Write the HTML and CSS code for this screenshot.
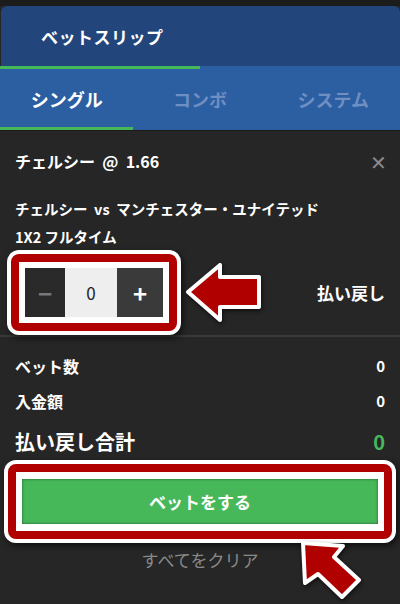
FILE: index.html
```html
<!DOCTYPE html>
<html lang="ja">

<head>
    <meta charset="UTF-8">
    <meta name="viewport" content="width=device-width, initial-scale=1.0">
    <title>ベットスリップ</title>
    <link rel="stylesheet" href="styles.css">
</head>

<body>
    <div class="slip">
        <div class="topStrip"></div>
        <div class="slipHead">
            <h1>ベットスリップ</h1>
        </div>
        <div class="progress"><span></span></div>
        <div class="tabs">
            <div class="tab active">シングル</div>
            <div class="tab">コンボ</div>
            <div class="tab">システム</div>
        </div>

        <div class="betBody">
            <div class="pick">
                <span>チェルシー&nbsp; @&nbsp; 1.66</span>
                <span class="close">&#x2715;</span>
            </div>
            <p class="match">チェルシー&nbsp; vs&nbsp; マンチェスター・ユナイテッド</p>
            <p class="market">1X2 フルタイム</p>

            <div class="stakeRow">
                <div class="callout callSmall">
                    <div class="stepper">
                        <div class="stepBtn minus">&minus;</div>
                        <div class="stepVal">0</div>
                        <div class="stepBtn plus">+</div>
                    </div>
                </div>
                <svg class="arrowLeft" width="80" height="64" viewBox="0 0 80 64">
                    <polygon points="4,31 36,4 36,16 75,16 75,46 36,46 36,59" fill="#b10000" stroke="#fff"
                        stroke-width="4" stroke-linejoin="round" />
                </svg>
                <span class="payLabel">払い戻し</span>
            </div>
        </div>

        <div class="summary">
            <div class="sumRow"><span>ベット数</span><span>0</span></div>
            <div class="sumRow"><span>入金額</span><span>0</span></div>
            <div class="sumRow total"><span>払い戻し合計</span><span class="green">0</span></div>

            <div class="callout callWide">
                <button class="placeBtn">ベットをする</button>
            </div>
            <div class="clearAll">すべてをクリア</div>
        </div>

        <svg class="arrowUp" width="70" height="68" viewBox="0 0 70 68">
            <polygon points="7,7 47,10 38,21 63,44 46,61 22,38 9,47" fill="#b10000" stroke="#fff" stroke-width="4"
                stroke-linejoin="round" />
        </svg>
    </div>
</body>

</html>
```

FILE: styles.css
```css
* {
    margin: 0;
    padding: 0;
    box-sizing: border-box;
}

body {
    font-family: "Noto Sans CJK JP", "Noto Sans", sans-serif;
    background-color: #262626;
    color: #fff;
    width: 400px;
    height: 604px;
    overflow: hidden;
}

.slip {
    position: relative;
    height: 604px;
}

.topStrip {
    height: 6px;
    background-color: #1c1c1c;
}

.slipHead {
    height: 60px;
    background-color: #22457b;
    border-radius: 6px 6px 0 0;
    margin-left: 1px;
    display: flex;
    align-items: center;
    padding-left: 40px;
}

.slipHead h1 {
    font-size: 17px;
    font-weight: 700;
    letter-spacing: 0.5px;
}

.progress {
    height: 3px;
    background-color: #2c5ea2;
}

.progress span {
    display: block;
    width: 50%;
    height: 100%;
    background-color: #46b85a;
}

.tabs {
    display: flex;
    height: 62px;
    background-color: #2c5ea2;
    border-bottom: 1px solid #1a1a1a;
}

.tab {
    flex: 1;
    display: flex;
    align-items: center;
    justify-content: center;
    font-size: 18px;
    font-weight: 700;
    color: #6f8ec2;
    padding-top: 1px;
    border-bottom: 3px solid transparent;
}

.tab.active {
    color: #fff;
    border-bottom-color: #46b85a;
}

.betBody {
    padding: 15px 15px 0 15px;
}

.pick {
    display: flex;
    justify-content: space-between;
    align-items: center;
    font-size: 16px;
    font-weight: 700;
    height: 30px;
}

.close {
    color: #8a8a8a;
    font-size: 20px;
    font-weight: 400;
    margin-right: -2px;
}

.match {
    margin-top: 23px;
    font-size: 14.5px;
    font-weight: 700;
    line-height: 20px;
}

.market {
    margin-top: 8px;
    font-size: 14.5px;
    font-weight: 700;
    line-height: 20px;
}

.stakeRow {
    display: flex;
    align-items: center;
    margin-top: 7px;
    margin-left: -4px;
}

.callout {
    background-color: #fff;
    border: 8px solid #b10000;
    border-radius: 8px;
    box-shadow: 0 0 0 4px #fff, 2px 3px 6px 4px rgba(0, 0, 0, 0.6);
}

.callSmall {
    padding: 6px 6px;
}

.stepper {
    display: flex;
    height: 49px;
    box-shadow: inset 0 2px 3px rgba(0, 0, 0, 0.3);
}

.stepBtn {
    display: flex;
    align-items: center;
    justify-content: center;
    font-size: 24px;
    font-weight: 700;
}

.minus {
    width: 40px;
    background-color: #2a2a2a;
    color: #777;
}

.plus {
    width: 46px;
    background-color: #3a3a3a;
    color: #fff;
}

.stepVal {
    width: 52px;
    background-color: #eeeeee;
    color: #222;
    font-size: 17px;
    display: flex;
    align-items: center;
    justify-content: center;
}

.arrowLeft {
    margin-left: 7px;
    filter: drop-shadow(1px 2px 2px rgba(0, 0, 0, 0.6));
}

.payLabel {
    margin-left: auto;
    font-size: 17px;
    font-weight: 700;
}

.summary {
    margin-top: 4px;
    border-top: 2px solid #3a3a3a;
    padding: 11px 15px 0 15px;
}

.sumRow {
    display: flex;
    justify-content: space-between;
    align-items: center;
    height: 35px;
    font-size: 16px;
    font-weight: 700;
}

.sumRow span:last-child {
    font-size: 15px;
}

.sumRow.total {
    margin-top: 6px;
    font-size: 20px;
}

.sumRow.total span:last-child {
    font-size: 20px;
}

.green {
    color: #46b85a;
}

.callWide {
    margin: 5px -7px 0 -7px;
    padding: 7px 6px;
}

.placeBtn {
    display: block;
    width: 100%;
    height: 45px;
    background-color: #46b85a;
    border: none;
    color: #fff;
    font-family: inherit;
    font-size: 17px;
    font-weight: 700;
    box-shadow: inset 0 0 3px rgba(0, 0, 0, 0.5);
}

.clearAll {
    text-align: center;
    color: #8a8a8a;
    font-size: 17px;
    margin-top: 8px;
}

.arrowUp {
    position: absolute;
    left: 296px;
    top: 536px;
    filter: drop-shadow(1px 2px 2px rgba(0, 0, 0, 0.6));
}
```
